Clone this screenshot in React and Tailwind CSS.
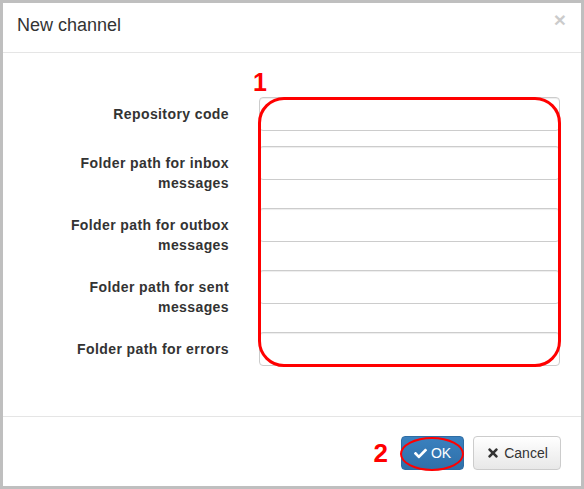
import { FaCheck, FaTimes } from "react-icons/fa";

const fields = [
  "Repository code",
  "Folder path for inbox messages",
  "Folder path for outbox messages",
  "Folder path for sent messages",
  "Folder path for errors",
];

const App = () => {
  return (
    <div className="w-[584px] h-[489px] bg-white border-[3px] border-[#bfbfbf] font-['Liberation_Sans',Arial,sans-serif] text-[#333]">
      {/* header */}
      <div className="flex justify-between items-start pl-[14px] pr-[15px] pt-[10px] pb-[15px] border-b border-[#e5e5e5]">
        <h4 className="text-[18px] leading-[24px]">New channel</h4>
        <button className="text-[21px] leading-[21px] font-bold text-black opacity-20 mt-[-4px]">×</button>
      </div>

      {/* body */}
      <div className="pt-[44px] pb-[50px]">
        <div className="relative">
          <span className="absolute left-[250px] top-[-27px] text-[25px] leading-[25px] font-bold text-[#ff0000]">1</span>
          {fields.map((label, i) => (
            <div key={label} className={`flex pl-[63px] gap-[30px] ${i < fields.length - 1 ? "mb-[15px]" : ""}`}>
              <label className="w-[163px] shrink-0 text-right font-bold text-[14px] leading-[20px] tracking-[0.4px] pt-[7px]">{label}</label>
              <input
                type="text"
                className="w-[301px] h-[34px] border border-[#ccc] rounded-[4px] px-3 shadow-[inset_0_1px_1px_rgba(0,0,0,0.075)] focus:outline-none"
              />
            </div>
          ))}
          <div className="absolute left-[255px] top-0 w-[303px] h-[270px] border-[3px] border-[#ff0000] rounded-[26px] pointer-events-none" />
        </div>
      </div>

      {/* footer */}
      <div className="flex justify-end items-center border-t border-[#e5e5e5] pt-[19px] pb-[16px] pr-[20px]">
        <span className="text-[26px] leading-[26px] font-bold text-[#ff0000] mr-[13px]">2</span>
        <div className="relative">
          <button className="flex items-center justify-center gap-[4px] w-[63px] h-[34px] bg-linear-to-b from-[#3a81bf] to-[#2f70a9] border border-[#2e6da4] rounded-[4px] text-white text-[14px]">
            <FaCheck size={13} />
            OK
          </button>
          <div className="absolute left-[-1px] top-[1px] w-[64px] h-[34px] border-2 border-[#ff0000] rounded-[50%] pointer-events-none" />
        </div>
        <button className="flex items-center justify-center gap-[4px] ml-[9px] w-[88px] h-[34px] bg-linear-to-b from-white to-[#e8e8e8] border border-[#ccc] rounded-[4px] text-[#333] text-[14px]">
          <FaTimes size={14} />
          Cancel
        </button>
      </div>
    </div>
  );
};

export default App;
